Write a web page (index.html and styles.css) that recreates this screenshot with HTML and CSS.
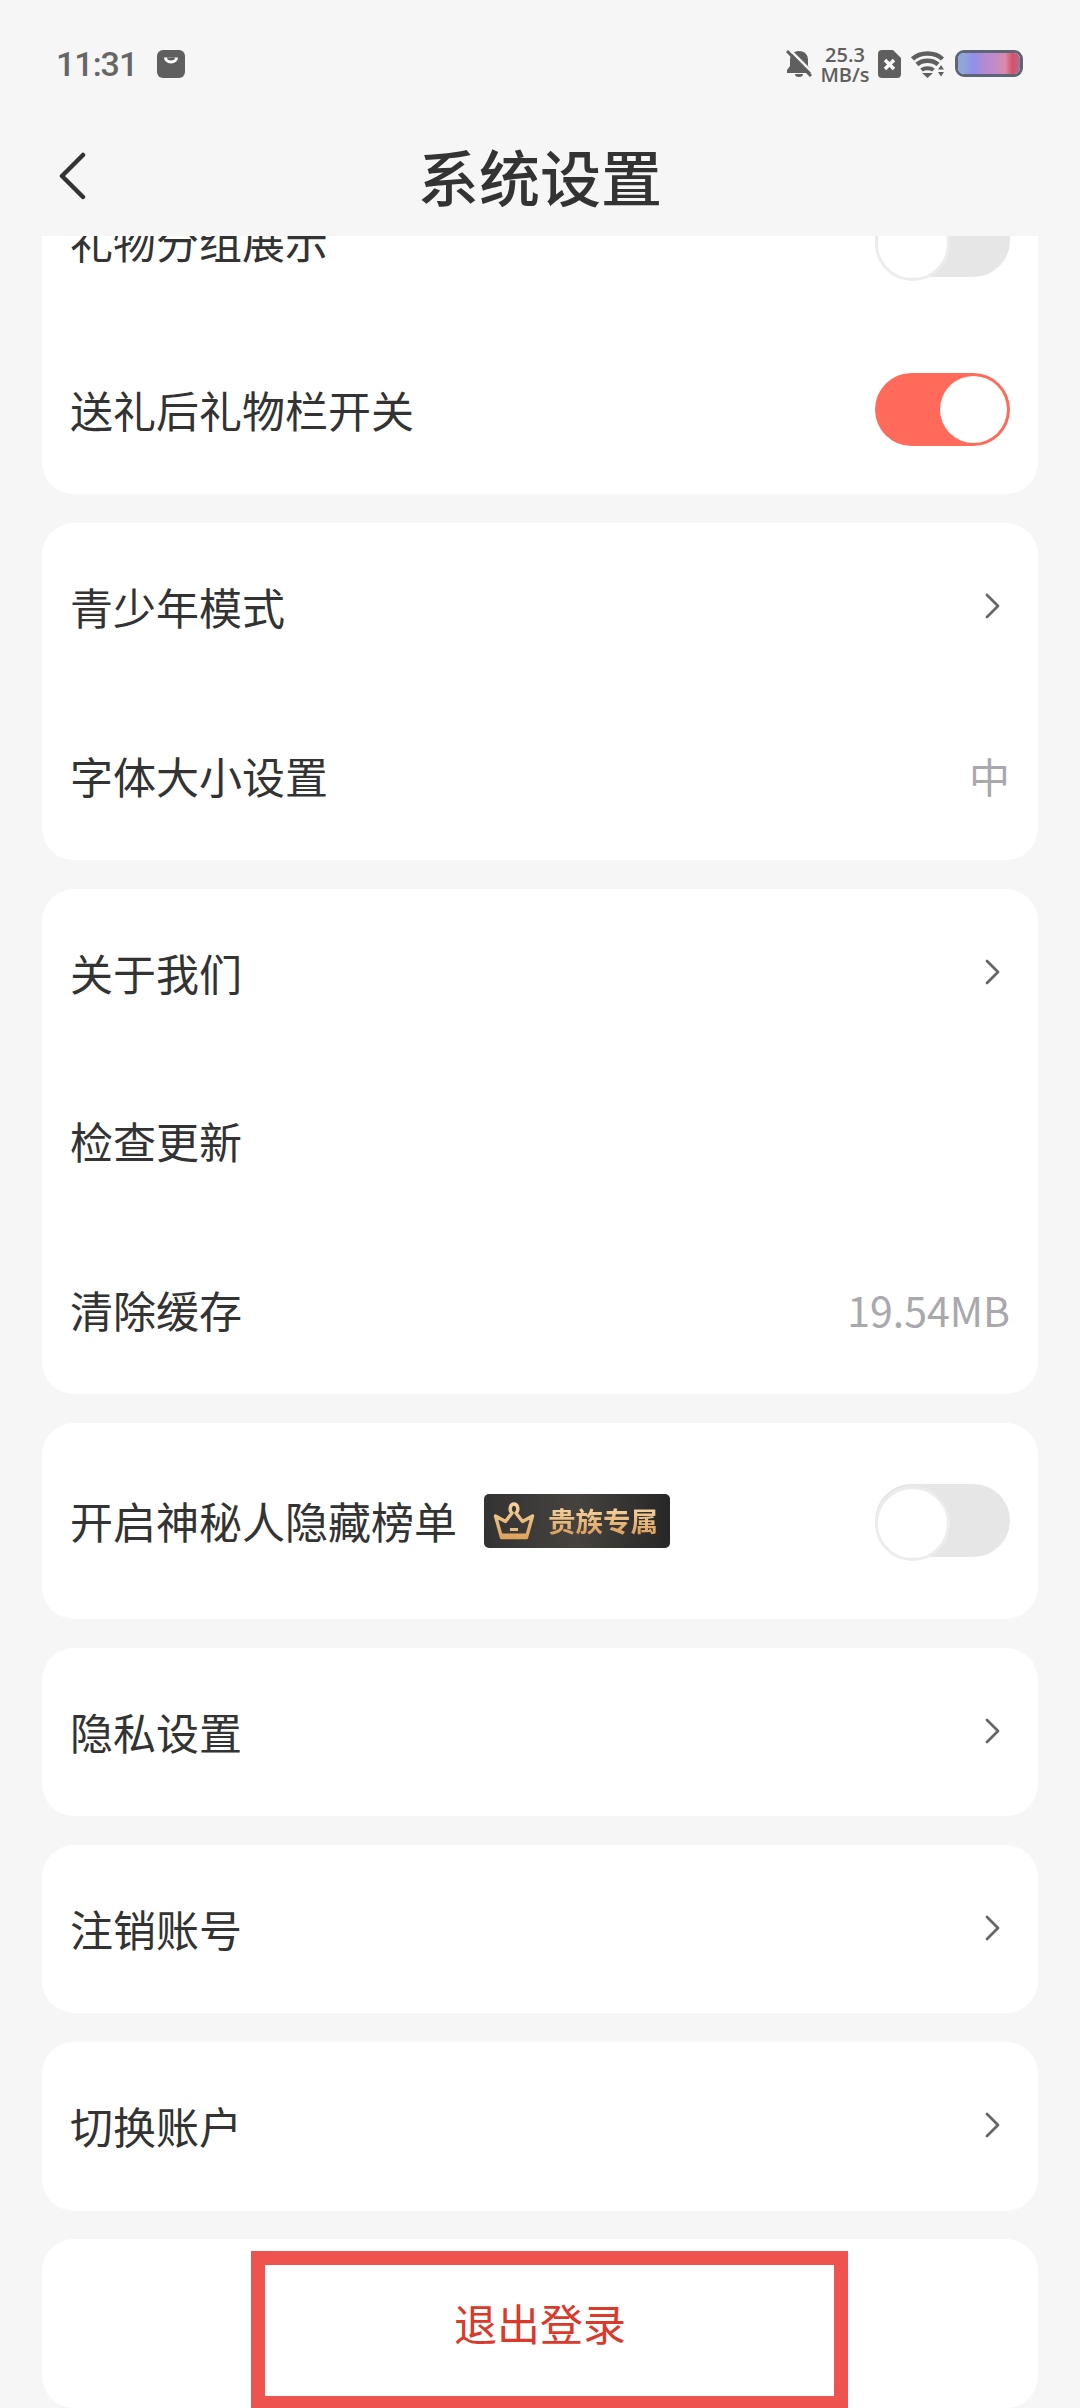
FILE: index.html
```html
<!DOCTYPE html>
<html lang="zh-CN">
<head>
  <meta charset="UTF-8">
  <title>系统设置</title>
  <link rel="stylesheet" href="styles.css">
</head>
<body>
  <div class="page">
    <div class="status-bar">
      <div class="status-left">
        <span class="time">11:31</span>
        <svg class="bag" width="28" height="28" viewBox="0 0 28 28">
          <rect width="28" height="28" rx="6" fill="#5f5f5f"/>
          <path d="M7 7.500a7 6 0 0 0 14 0z" fill="#fff"/>
          <path d="M10 7.500a4 3 0 0 0 8 0z" fill="#5f5f5f"/>
        </svg>
      </div>
      <div class="status-right">
        <svg width="26" height="27" viewBox="0 0 26 27">
          <path d="M13 1C7 1 4 5 4 10v6l-3 4v3h24v-3l-3-4v-6c0-5-3-9-9-9z" fill="#5f5f5f"/>
          <path d="M9 24a4 3 0 0 0 8 0z" fill="#5f5f5f"/>
          <path d="M3 -1l24 24" stroke="#f6f6f6" stroke-width="2.500"/>
          <path d="M1 1l24 25" stroke="#5f5f5f" stroke-width="3"/>
        </svg>
        <div class="speed">
          <span class="speed-num">25.3</span>
          <span class="speed-unit">MB/s</span>
        </div>
        <svg width="23" height="28" viewBox="0 0 23 28">
          <path d="M4 0h11l8 8v16a4 4 0 0 1-4 4H4a4 4 0 0 1-4-4V4a4 4 0 0 1 4-4z" fill="#5f5f5f"/>
          <path d="M7 10l9 9M16 10l-9 9" stroke="#fff" stroke-width="3.400"/>
        </svg>
        <svg width="34" height="28" viewBox="0 0 34 28">
          <path d="M1.500 9C9 1.500 24 1.500 31.500 9" fill="none" stroke="#5f5f5f" stroke-width="4.500"/>
          <path d="M6 14.500c5.500-5 15.500-5 21 0" fill="none" stroke="#5f5f5f" stroke-width="4.500"/>
          <path d="M10.500 20c3-2.500 9-2.500 12 0" fill="none" stroke="#5f5f5f" stroke-width="4"/>
          <path d="M11 23h11l-5.500 5z" fill="#5f5f5f"/>
          <path d="M27 19.500l3-4.500 3 4.500zM27 22h6l-3 4.500z" fill="#5f5f5f"/>
        </svg>
        <div class="battery"><div class="battery-fill"></div></div>
      </div>
    </div>

    <div class="nav-bar">
      <svg class="back" width="28" height="48" viewBox="0 0 28 48">
        <path d="M25 3L4 24l21 21" fill="none" stroke="#333" stroke-width="4.500" stroke-linecap="round" stroke-linejoin="round"/>
      </svg>
      <h1 class="title">系统设置</h1>
    </div>

    <div class="scroll">
      <div class="list">
        <div class="card card-first">
          <div class="row"><span class="label">礼物分组展示</span><span class="toggle"></span></div>
          <div class="row"><span class="label">送礼后礼物栏开关</span><span class="toggle on"></span></div>
        </div>

        <div class="card">
          <div class="row"><span class="label">青少年模式</span><svg class="arrow" width="15" height="26" viewBox="0 0 15 26"><path d="M2 2l11 11L2 24" fill="none" stroke="#666" stroke-width="2.800" stroke-linecap="round" stroke-linejoin="round"/></svg></div>
          <div class="row"><span class="label">字体大小设置</span><span class="value">中</span></div>
        </div>

        <div class="card">
          <div class="row"><span class="label">关于我们</span><svg class="arrow" width="15" height="26" viewBox="0 0 15 26"><path d="M2 2l11 11L2 24" fill="none" stroke="#666" stroke-width="2.800" stroke-linecap="round" stroke-linejoin="round"/></svg></div>
          <div class="row"><span class="label">检查更新</span></div>
          <div class="row"><span class="label">清除缓存</span><span class="value">19.54MB</span></div>
        </div>

        <div class="card card-tall">
          <div class="row">
            <div class="row-label">
              <span class="label">开启神秘人隐藏榜单</span>
              <div class="noble-tag">
                <svg width="42" height="38" viewBox="0 0 42 38">
                  <defs>
                    <linearGradient id="gold" gradientUnits="userSpaceOnUse" x1="0" y1="0" x2="0" y2="38">
                      <stop offset="0" stop-color="#f6d6a4"/>
                      <stop offset="1" stop-color="#dd9f58"/>
                    </linearGradient>
                  </defs>
                  <path d="M8.500 35.500h25L39.500 14l-10 5.500-6.500-8.500c3.500-3 1.500-9-2-9s-5.500 6-2 9l-6.500 8.500-10-5.500z" fill="none" stroke="url(#gold)" stroke-width="3.400" stroke-linejoin="round"/>
                  <path d="M8 33.500h26" stroke="url(#gold)" stroke-width="4"/>
                  <path d="M17 27.500h8" stroke="#e9bb82" stroke-width="3"/>
                </svg>
                <span class="noble-text">贵族专属</span>
              </div>
            </div>
            <span class="toggle"></span>
          </div>
        </div>

        <div class="card">
          <div class="row"><span class="label">隐私设置</span><svg class="arrow" width="15" height="26" viewBox="0 0 15 26"><path d="M2 2l11 11L2 24" fill="none" stroke="#666" stroke-width="2.800" stroke-linecap="round" stroke-linejoin="round"/></svg></div>
        </div>

        <div class="card">
          <div class="row"><span class="label">注销账号</span><svg class="arrow" width="15" height="26" viewBox="0 0 15 26"><path d="M2 2l11 11L2 24" fill="none" stroke="#666" stroke-width="2.800" stroke-linecap="round" stroke-linejoin="round"/></svg></div>
        </div>

        <div class="card">
          <div class="row"><span class="label">切换账户</span><svg class="arrow" width="15" height="26" viewBox="0 0 15 26"><path d="M2 2l11 11L2 24" fill="none" stroke="#666" stroke-width="2.800" stroke-linecap="round" stroke-linejoin="round"/></svg></div>
        </div>

        <div class="card logout">
          <span>退出登录</span>
          <div class="mark"></div>
        </div>
      </div>
    </div>
  </div>
</body>
</html>
```

FILE: styles.css
```css
*{
  padding: 0;
  margin: 0;
  box-sizing: border-box;
}
html,body{
  height: 100%;
}
body{
  background: #f6f6f6;
  font-family: "Noto Sans CJK SC", "Noto Sans", sans-serif;
  color: #333;
}
.page{
  display: flex;
  flex-direction: column;
  height: 2408px;
  overflow: hidden;
}
.status-bar{
  display: flex;
  justify-content: space-between;
  align-items: center;
  height: 127px;
  padding: 0 57px 0 56px;
}
.status-left{
  display: flex;
  align-items: center;
  gap: 20px;
}
.time{
  font-family: Roboto, sans-serif;
  font-size: 34px;
  font-weight: 500;
  letter-spacing: -1px;
  color: #666;
}
.status-right{
  display: flex;
  align-items: center;
  gap: 10px;
}
.speed{
  display: flex;
  flex-direction: column;
  align-items: center;
  width: 46px;
  margin-top: 3px;
  font-family: "Open Sans", sans-serif;
  font-size: 20px;
  font-weight: 600;
  line-height: 20px;
  white-space: nowrap;
  color: #5f5f5f;
}
.battery{
  width: 68px;
  height: 27px;
  border: 3px solid #5d6578;
  border-radius: 9px;
  overflow: hidden;
}
.battery-fill{
  height: 100%;
  background: linear-gradient(90deg, #8fa6d6 10%, #8e8fec 24%, #ad8cd6 38%, #c48ac8 60%, #d88aa8 76%, #d85068 88%, #a87090 100%);
}
.nav-bar{
  display: flex;
  align-items: center;
  justify-content: center;
  position: relative;
  height: 109px;
}
.back{
  position: absolute;
  left: 58px;
  top: 25px;
}
.title{
  margin-bottom: 12px;
  font-size: 61px;
  font-weight: 500;
  color: #333;
  line-height: 80px;
}
.scroll{
  flex: 1;
  overflow: hidden;
}
.list{
  display: flex;
  flex-direction: column;
  gap: 28.750px;
  margin-top: -80px;
  padding: 0 42px;
}
.card{
  background: #fff;
  border-radius: 32px;
}
.row{
  display: flex;
  justify-content: space-between;
  align-items: center;
  height: 168.500px;
  padding: 0 28px;
  font-size: 43px;
  color: #333;
}
.card-first .row{
  height: 169px;
}
.card-tall .row{
  height: 196px;
}
.label{
  margin-bottom: 2px;
}
.row-label{
  display: flex;
  align-items: center;
  gap: 27px;
}
.value{
  margin-bottom: 2px;
  font-size: 41px;
  color: #a8a8ad;
}
.arrow{
  margin: 0 10px 2px 0;
}
.toggle{
  position: relative;
  width: 135px;
  height: 73px;
  border-radius: 37px;
  background: #e6e6e6;
}
.toggle::after{
  content: "";
  position: absolute;
  left: 0;
  top: 2px;
  width: 69px;
  height: 69px;
  border-radius: 50%;
  border: 3px solid #ececec;
  background: #fff;
}
.toggle.on{
  background: #ff6a5a;
}
.toggle.on::after{
  left: 65px;
  top: 3px;
  width: 67px;
  height: 67px;
  border: 0;
}
.noble-tag{
  display: flex;
  align-items: center;
  gap: 13px;
  width: 186px;
  height: 54px;
  padding-left: 9px;
  border-radius: 5px;
  background: linear-gradient(90deg, #333 0%, #46433f 50%, #272727 100%);
}
.noble-text{
  font-size: 27.500px;
  font-weight: 700;
  line-height: 1;
  white-space: nowrap;
  color: #e9bb82;
  background: linear-gradient(180deg, #f5d5a5, #dc9e5a);
  -webkit-background-clip: text;
  background-clip: text;
  -webkit-text-fill-color: transparent;
}
.logout{
  display: flex;
  align-items: center;
  justify-content: center;
  position: relative;
  height: 169px;
  padding-bottom: 3px;
  font-size: 43px;
  color: #d93a2b;
}
.mark{
  position: absolute;
  left: 209px;
  top: 12px;
  width: 597px;
  height: 159px;
  border: 14px solid #ef5350;
}
```
